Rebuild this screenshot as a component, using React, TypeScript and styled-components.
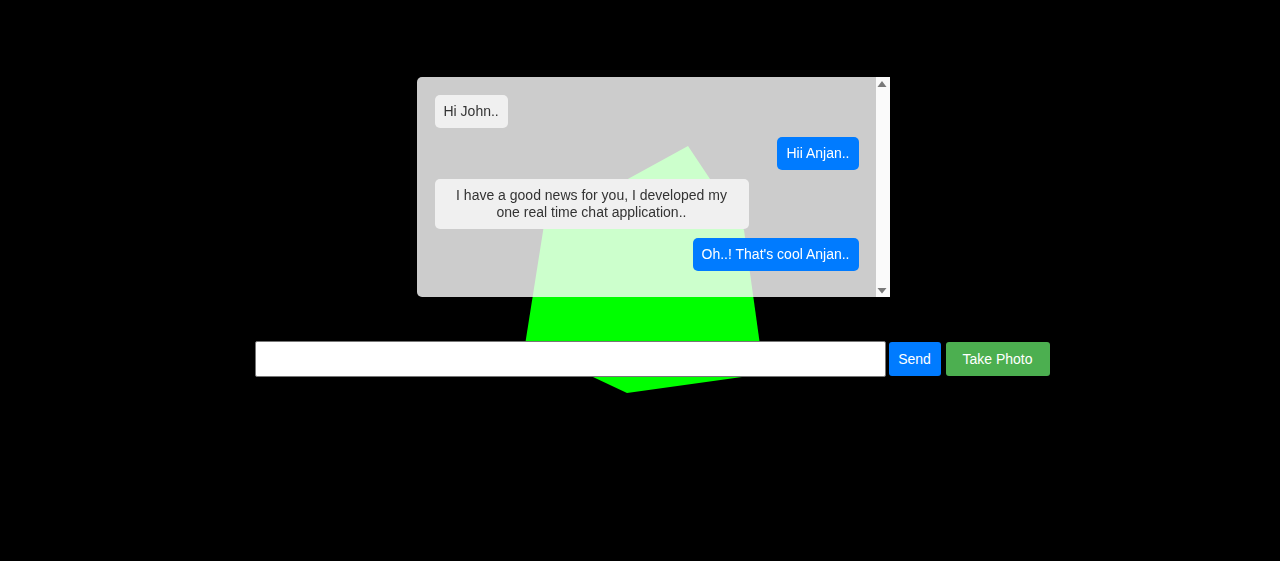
import React from 'react';
import styled, { createGlobalStyle } from 'styled-components';

const GlobalStyle = createGlobalStyle`
  html, body {
    margin: 0;
    padding: 0;
    background: #000;
    font-family: "Liberation Sans", Arial, sans-serif;
    font-size: 14px;
  }
`;

const Backdrop = styled.svg`
  position: fixed;
  top: 0;
  left: 0;
  width: 1280px;
  height: 561px;
  z-index: 0;
`;

const Page = styled.div`
  position: relative;
  z-index: 1;
  display: flex;
  flex-direction: column;
  align-items: center;
  padding: 77px 0 0 26px;
`;

const ChatBox = styled.div`
  width: 473px;
  height: 220px;
  display: flex;
  background: rgba(255, 255, 255, 0.8);
  border-radius: 5px 0 0 5px;
`;

const Messages = styled.div`
  flex: 1;
  padding: 18px 17px 18px 18px;
  display: flex;
  flex-direction: column;
  gap: 9px;
  overflow: hidden;
`;

const ScrollTrack = styled.div`
  width: 14px;
  background: #fafafa;
  display: flex;
  flex-direction: column;
  justify-content: space-between;
`;

const ArrowIcon = styled.svg`
  display: block;
  width: 14px;
  height: 14px;
`;

const Bubble = styled.div<{ $mine?: boolean }>`
  box-sizing: border-box;
  align-self: ${(p) => (p.$mine ? 'flex-end' : 'flex-start')};
  max-width: 314px;
  padding: 8px 9px;
  line-height: 17px;
  border-radius: 5px;
  text-align: center;
  background: ${(p) => (p.$mine ? '#007bff' : '#f0f0f0')};
  color: ${(p) => (p.$mine ? '#fff' : '#333')};
`;

const InputRow = styled.div`
  display: flex;
  align-items: center;
  margin: 44px 0 0 -2px;
`;

const MessageInput = styled.input`
  box-sizing: border-box;
  width: 631px;
  height: 36px;
  margin: 0 3px 0 0;
  padding: 0 6px;
  border: 1px solid #767676;
  border-radius: 2px;
  background: #fff;
  outline: none;
  font: inherit;
`;

const Button = styled.button<{ $color: string; $width: number }>`
  width: ${(p) => p.$width}px;
  height: 34px;
  padding: 0;
  margin: 0;
  border: none;
  border-radius: 3px;
  background: ${(p) => p.$color};
  color: #fff;
  font-family: "Liberation Sans", Arial, sans-serif;
  font-size: 14px;
  cursor: pointer;

  & + & {
    margin-left: 5px;
  }
`;

const messages = [
  { text: 'Hi John..', mine: false },
  { text: 'Hii Anjan..', mine: true },
  { text: 'I have a good news for you, I developed my one real time chat application..', mine: false },
  { text: "Oh..! That's cool Anjan..", mine: true },
];

function Arrow({ down }: { down?: boolean }) {
  return (
    <ArrowIcon viewBox="0 0 14 14">
      <polygon
        points={down ? '1.5,5 10.5,5 6,10.5' : '1.5,10 10.5,10 6,4'}
        fill="#7a7a7a"
      />
    </ArrowIcon>
  );
}

export default function App() {
  return (
    <>
      <GlobalStyle />
      <Backdrop viewBox="0 0 1280 561">
        <polygon
          points="688,146 744,230 760,345 742,377 627,393 525,345 544,225"
          fill="#00ff00"
        />
      </Backdrop>
      <Page>
        <ChatBox>
          <Messages>
            {messages.map((m, i) => (
              <Bubble key={i} $mine={m.mine}>
                {m.text}
              </Bubble>
            ))}
          </Messages>
          <ScrollTrack>
            <Arrow />
            <Arrow down />
          </ScrollTrack>
        </ChatBox>
        <InputRow>
          <MessageInput type="text" />
          <Button $color="#007bff" $width={52}>Send</Button>
          <Button $color="#4caf50" $width={104}>Take Photo</Button>
        </InputRow>
      </Page>
    </>
  );
}
